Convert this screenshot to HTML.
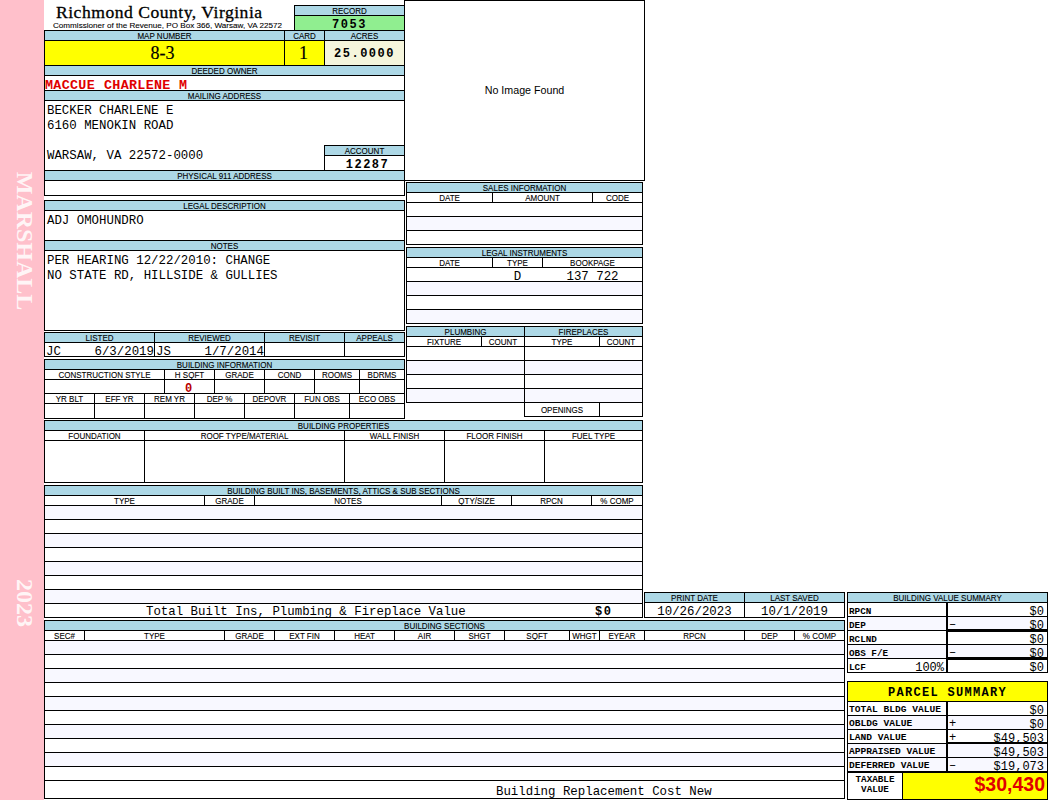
<!DOCTYPE html>
<html><head><meta charset="utf-8"><style>
html,body{margin:0;padding:0;background:#fff;width:1050px;height:800px;overflow:hidden}
body{position:relative}
.a{position:absolute;box-sizing:border-box}
.k{background:#000}
.t{white-space:nowrap;overflow:visible;color:#000}
.lab{font-family:"Liberation Sans",sans-serif;font-size:8px;-webkit-text-stroke:0.1px #000;transform:translateY(1px) scaleY(1.18)}
.mono{font-family:"Liberation Mono",monospace;font-size:12.4px}
.mono2{font-family:"Liberation Mono",monospace;font-size:12.4px}
.mb{font-family:"Liberation Mono",monospace;font-size:12px;font-weight:bold;letter-spacing:1.5px}
.big{font-family:"Liberation Serif",serif;font-size:18px;-webkit-text-stroke:0.2px #000}
.owner{font-family:"Liberation Mono",monospace;font-size:13.4px;letter-spacing:0.3px;font-weight:bold;color:#e00000}
.redb{font-family:"Liberation Mono",monospace;font-size:12px;font-weight:bold;color:#b80000}
.noimg{font-family:"Liberation Sans",sans-serif;font-size:10.7px}
.slab{font-family:"Liberation Mono",monospace;font-size:9.3px;font-weight:bold}
.val{font-family:"Liberation Mono",monospace;font-size:12px}
.psum{font-family:"Liberation Mono",monospace;font-size:12px;font-weight:bold;letter-spacing:1.3px}
.slab2{font-family:"Liberation Mono",monospace;font-size:9.6px;font-weight:bold}
.tax{font-family:"Liberation Sans",sans-serif;font-size:19.5px;font-weight:bold;color:#e00000}
.side{display:flex;align-items:center;justify-content:center;color:rgba(255,255,255,0.85)}
.rot{display:inline-block;transform:rotate(90deg);font-family:"Liberation Serif",serif;white-space:nowrap;line-height:1}
.b{font-weight:bold}
</style></head><body>
<div class="a" style="left:0px;top:0px;width:44px;height:800px;background:#ffc0cb"></div>
<div class="a side" style="left:3px;top:171px;width:44px;height:140px"><span class="rot b" style="font-size:24px">MARSHALL</span></div>
<div class="a side" style="left:3px;top:578px;width:44px;height:50px"><span class="rot b" style="font-size:24px">2023</span></div>
<div class="a t" style="left:56px;top:2px;font:17.6px 'Liberation Serif',serif;letter-spacing:0.5px;line-height:20px;-webkit-text-stroke:0.3px #000">Richmond County, Virginia</div>
<div class="a t" style="left:53px;top:21px;font-family:Liberation Sans,sans-serif;font-size:8.1px;line-height:10px;-webkit-text-stroke:0.1px #000">Commissioner of the Revenue, PO Box 366, Warsaw, VA 22572</div>
<div class="a k" style="left:294px;top:5px;width:111px;height:1px"></div>
<div class="a k" style="left:294px;top:30px;width:111px;height:1px"></div>
<div class="a k" style="left:294px;top:5px;width:1px;height:26px"></div>
<div class="a k" style="left:404px;top:5px;width:1px;height:26px"></div>
<div class="a" style="left:295px;top:6px;width:109px;height:9px;background:#add8e6"></div>
<div class="a t lab" style="left:295px;top:6px;width:109px;height:9px;line-height:9px;text-align:center;">RECORD</div>
<div class="a k" style="left:294px;top:15px;width:111px;height:1px"></div>
<div class="a" style="left:295px;top:16px;width:109px;height:14px;background:#90ee90"></div>
<div class="a t mb" style="left:295px;top:18px;width:109px;height:14px;line-height:14px;text-align:center;">7053</div>
<div class="a k" style="left:44px;top:30px;width:361px;height:1px"></div>
<div class="a k" style="left:44px;top:195px;width:361px;height:1px"></div>
<div class="a k" style="left:44px;top:30px;width:1px;height:166px"></div>
<div class="a k" style="left:404px;top:30px;width:1px;height:166px"></div>
<div class="a" style="left:45px;top:31px;width:239px;height:9px;background:#add8e6"></div>
<div class="a t lab" style="left:45px;top:31px;width:239px;height:9px;line-height:9px;text-align:center;">MAP NUMBER</div>
<div class="a" style="left:285px;top:31px;width:39px;height:9px;background:#add8e6"></div>
<div class="a t lab" style="left:285px;top:31px;width:39px;height:9px;line-height:9px;text-align:center;">CARD</div>
<div class="a" style="left:325px;top:31px;width:79px;height:9px;background:#add8e6"></div>
<div class="a t lab" style="left:325px;top:31px;width:79px;height:9px;line-height:9px;text-align:center;">ACRES</div>
<div class="a k" style="left:44px;top:40px;width:361px;height:1px"></div>
<div class="a k" style="left:284px;top:30px;width:1px;height:36px"></div>
<div class="a k" style="left:324px;top:30px;width:1px;height:36px"></div>
<div class="a" style="left:45px;top:41px;width:239px;height:24px;background:#ffff00"></div>
<div class="a t big" style="left:43px;top:41px;width:239px;height:24px;line-height:24px;text-align:center;">8-3</div>
<div class="a" style="left:285px;top:41px;width:39px;height:24px;background:#ffff00"></div>
<div class="a t big" style="left:284px;top:41px;width:39px;height:24px;line-height:24px;text-align:center;">1</div>
<div class="a" style="left:325px;top:41px;width:79px;height:24px;background:#f5f5dc"></div>
<div class="a t mb" style="left:325px;top:42px;width:79px;height:24px;line-height:24px;text-align:center;">25.0000</div>
<div class="a k" style="left:44px;top:65px;width:361px;height:1px"></div>
<div class="a" style="left:45px;top:66px;width:359px;height:9px;background:#add8e6"></div>
<div class="a t lab" style="left:45px;top:66px;width:359px;height:9px;line-height:9px;text-align:center;">DEEDED OWNER</div>
<div class="a k" style="left:44px;top:75px;width:361px;height:1px"></div>
<div class="a t owner" style="left:45px;top:79px;width:359px;height:14px;line-height:14px;text-align:left;">MACCUE</div>
<div class="a t owner" style="left:45px;top:79px;width:359px;height:14px;line-height:14px;text-align:left;padding-left:59px">CHARLENE M</div>
<div class="a k" style="left:44px;top:90px;width:361px;height:1px"></div>
<div class="a" style="left:45px;top:91px;width:359px;height:9px;background:#add8e6"></div>
<div class="a t lab" style="left:45px;top:91px;width:359px;height:9px;line-height:9px;text-align:center;">MAILING ADDRESS</div>
<div class="a k" style="left:44px;top:100px;width:361px;height:1px"></div>
<div class="a t mono" style="left:47px;top:104px;line-height:15px;white-space:pre">BECKER CHARLENE E
6160 MENOKIN ROAD

WARSAW, VA 22572-0000</div>
<div class="a k" style="left:324px;top:145px;width:81px;height:1px"></div>
<div class="a k" style="left:324px;top:170px;width:81px;height:1px"></div>
<div class="a k" style="left:324px;top:145px;width:1px;height:26px"></div>
<div class="a k" style="left:404px;top:145px;width:1px;height:26px"></div>
<div class="a" style="left:325px;top:146px;width:79px;height:9px;background:#add8e6"></div>
<div class="a t lab" style="left:325px;top:146px;width:79px;height:9px;line-height:9px;text-align:center;">ACCOUNT</div>
<div class="a k" style="left:324px;top:155px;width:81px;height:1px"></div>
<div class="a t mb" style="left:328px;top:158px;width:79px;height:14px;line-height:14px;text-align:center;">12287</div>
<div class="a k" style="left:44px;top:170px;width:361px;height:1px"></div>
<div class="a" style="left:45px;top:171px;width:359px;height:9px;background:#add8e6"></div>
<div class="a t lab" style="left:45px;top:171px;width:359px;height:9px;line-height:9px;text-align:center;">PHYSICAL 911 ADDRESS</div>
<div class="a k" style="left:44px;top:180px;width:361px;height:1px"></div>
<div class="a k" style="left:44px;top:200px;width:361px;height:1px"></div>
<div class="a k" style="left:44px;top:330px;width:361px;height:1px"></div>
<div class="a k" style="left:44px;top:200px;width:1px;height:131px"></div>
<div class="a k" style="left:404px;top:200px;width:1px;height:131px"></div>
<div class="a" style="left:45px;top:201px;width:359px;height:9px;background:#add8e6"></div>
<div class="a t lab" style="left:45px;top:201px;width:359px;height:9px;line-height:9px;text-align:center;">LEGAL DESCRIPTION</div>
<div class="a k" style="left:44px;top:210px;width:361px;height:1px"></div>
<div class="a t mono" style="left:47px;top:214px;line-height:15px;white-space:pre">ADJ OMOHUNDRO</div>
<div class="a k" style="left:44px;top:240px;width:361px;height:1px"></div>
<div class="a" style="left:45px;top:241px;width:359px;height:9px;background:#add8e6"></div>
<div class="a t lab" style="left:45px;top:241px;width:359px;height:9px;line-height:9px;text-align:center;">NOTES</div>
<div class="a k" style="left:44px;top:250px;width:361px;height:1px"></div>
<div class="a t mono" style="left:47px;top:254px;line-height:15px;white-space:pre">PER HEARING 12/22/2010: CHANGE
NO STATE RD, HILLSIDE &amp; GULLIES</div>
<div class="a k" style="left:44px;top:332px;width:361px;height:1px"></div>
<div class="a k" style="left:44px;top:356px;width:361px;height:1px"></div>
<div class="a k" style="left:44px;top:332px;width:1px;height:25px"></div>
<div class="a k" style="left:404px;top:332px;width:1px;height:25px"></div>
<div class="a" style="left:45px;top:333px;width:109px;height:9px;background:#add8e6"></div>
<div class="a t lab" style="left:45px;top:333px;width:109px;height:9px;line-height:9px;text-align:center;">LISTED</div>
<div class="a" style="left:155px;top:333px;width:109px;height:9px;background:#add8e6"></div>
<div class="a t lab" style="left:155px;top:333px;width:109px;height:9px;line-height:9px;text-align:center;">REVIEWED</div>
<div class="a" style="left:265px;top:333px;width:79px;height:9px;background:#add8e6"></div>
<div class="a t lab" style="left:265px;top:333px;width:79px;height:9px;line-height:9px;text-align:center;">REVISIT</div>
<div class="a" style="left:345px;top:333px;width:59px;height:9px;background:#add8e6"></div>
<div class="a t lab" style="left:345px;top:333px;width:59px;height:9px;line-height:9px;text-align:center;">APPEALS</div>
<div class="a k" style="left:44px;top:342px;width:361px;height:1px"></div>
<div class="a k" style="left:154px;top:332px;width:1px;height:25px"></div>
<div class="a k" style="left:264px;top:332px;width:1px;height:25px"></div>
<div class="a k" style="left:344px;top:332px;width:1px;height:25px"></div>
<div class="a t mono2" style="left:45px;top:346px;width:109px;height:13px;line-height:13px;text-align:left;padding-left:1px">JC</div>
<div class="a t mono2" style="left:45px;top:346px;width:109px;height:13px;line-height:13px;text-align:right;">6/3/2019</div>
<div class="a t mono2" style="left:155px;top:346px;width:109px;height:13px;line-height:13px;text-align:left;padding-left:1px">JS</div>
<div class="a t mono2" style="left:155px;top:346px;width:109px;height:13px;line-height:13px;text-align:right;">1/7/2014</div>
<div class="a k" style="left:44px;top:359px;width:361px;height:1px"></div>
<div class="a k" style="left:44px;top:418px;width:361px;height:1px"></div>
<div class="a k" style="left:44px;top:359px;width:1px;height:60px"></div>
<div class="a k" style="left:404px;top:359px;width:1px;height:60px"></div>
<div class="a" style="left:45px;top:360px;width:359px;height:9px;background:#add8e6"></div>
<div class="a t lab" style="left:45px;top:360px;width:359px;height:9px;line-height:9px;text-align:center;">BUILDING INFORMATION</div>
<div class="a k" style="left:44px;top:369px;width:361px;height:1px"></div>
<div class="a t lab" style="left:45px;top:370px;width:119px;height:9px;line-height:9px;text-align:center;">CONSTRUCTION STYLE</div>
<div class="a t lab" style="left:165px;top:370px;width:49px;height:9px;line-height:9px;text-align:center;">H SQFT</div>
<div class="a t lab" style="left:215px;top:370px;width:49px;height:9px;line-height:9px;text-align:center;">GRADE</div>
<div class="a t lab" style="left:265px;top:370px;width:49px;height:9px;line-height:9px;text-align:center;">COND</div>
<div class="a t lab" style="left:315px;top:370px;width:44px;height:9px;line-height:9px;text-align:center;">ROOMS</div>
<div class="a t lab" style="left:360px;top:370px;width:44px;height:9px;line-height:9px;text-align:center;">BDRMS</div>
<div class="a k" style="left:164px;top:369px;width:1px;height:25px"></div>
<div class="a k" style="left:214px;top:369px;width:1px;height:25px"></div>
<div class="a k" style="left:264px;top:369px;width:1px;height:25px"></div>
<div class="a k" style="left:314px;top:369px;width:1px;height:25px"></div>
<div class="a k" style="left:359px;top:369px;width:1px;height:25px"></div>
<div class="a k" style="left:44px;top:379px;width:361px;height:1px"></div>
<div class="a t redb" style="left:164px;top:383px;width:49px;height:13px;line-height:13px;text-align:center;">0</div>
<div class="a k" style="left:44px;top:393px;width:361px;height:1px"></div>
<div class="a t lab" style="left:45px;top:394px;width:49px;height:9px;line-height:9px;text-align:center;">YR BLT</div>
<div class="a t lab" style="left:95px;top:394px;width:49px;height:9px;line-height:9px;text-align:center;">EFF YR</div>
<div class="a t lab" style="left:145px;top:394px;width:49px;height:9px;line-height:9px;text-align:center;">REM YR</div>
<div class="a t lab" style="left:195px;top:394px;width:49px;height:9px;line-height:9px;text-align:center;">DEP %</div>
<div class="a t lab" style="left:245px;top:394px;width:49px;height:9px;line-height:9px;text-align:center;">DEPOVR</div>
<div class="a t lab" style="left:295px;top:394px;width:54px;height:9px;line-height:9px;text-align:center;">FUN OBS</div>
<div class="a t lab" style="left:350px;top:394px;width:54px;height:9px;line-height:9px;text-align:center;">ECO OBS</div>
<div class="a k" style="left:94px;top:393px;width:1px;height:26px"></div>
<div class="a k" style="left:144px;top:393px;width:1px;height:26px"></div>
<div class="a k" style="left:194px;top:393px;width:1px;height:26px"></div>
<div class="a k" style="left:244px;top:393px;width:1px;height:26px"></div>
<div class="a k" style="left:294px;top:393px;width:1px;height:26px"></div>
<div class="a k" style="left:349px;top:393px;width:1px;height:26px"></div>
<div class="a k" style="left:44px;top:403px;width:361px;height:1px"></div>
<div class="a k" style="left:44px;top:420px;width:599px;height:1px"></div>
<div class="a k" style="left:44px;top:482px;width:599px;height:1px"></div>
<div class="a k" style="left:44px;top:420px;width:1px;height:63px"></div>
<div class="a k" style="left:642px;top:420px;width:1px;height:63px"></div>
<div class="a" style="left:45px;top:421px;width:597px;height:9px;background:#add8e6"></div>
<div class="a t lab" style="left:45px;top:421px;width:597px;height:9px;line-height:9px;text-align:center;">BUILDING PROPERTIES</div>
<div class="a k" style="left:44px;top:430px;width:599px;height:1px"></div>
<div class="a t lab" style="left:45px;top:431px;width:99px;height:9px;line-height:9px;text-align:center;">FOUNDATION</div>
<div class="a t lab" style="left:145px;top:431px;width:199px;height:9px;line-height:9px;text-align:center;">ROOF TYPE/MATERIAL</div>
<div class="a t lab" style="left:345px;top:431px;width:99px;height:9px;line-height:9px;text-align:center;">WALL FINISH</div>
<div class="a t lab" style="left:445px;top:431px;width:99px;height:9px;line-height:9px;text-align:center;">FLOOR FINISH</div>
<div class="a t lab" style="left:545px;top:431px;width:97px;height:9px;line-height:9px;text-align:center;">FUEL TYPE</div>
<div class="a k" style="left:144px;top:430px;width:1px;height:53px"></div>
<div class="a k" style="left:344px;top:430px;width:1px;height:53px"></div>
<div class="a k" style="left:444px;top:430px;width:1px;height:53px"></div>
<div class="a k" style="left:544px;top:430px;width:1px;height:53px"></div>
<div class="a k" style="left:44px;top:440px;width:599px;height:1px"></div>
<div class="a k" style="left:44px;top:485px;width:599px;height:1px"></div>
<div class="a k" style="left:44px;top:617px;width:599px;height:1px"></div>
<div class="a k" style="left:44px;top:485px;width:1px;height:133px"></div>
<div class="a k" style="left:642px;top:485px;width:1px;height:133px"></div>
<div class="a" style="left:45px;top:486px;width:597px;height:9px;background:#add8e6"></div>
<div class="a t lab" style="left:45px;top:486px;width:597px;height:9px;line-height:9px;text-align:center;">BUILDING BUILT INS, BASEMENTS, ATTICS &amp; SUB SECTIONS</div>
<div class="a k" style="left:44px;top:495px;width:599px;height:1px"></div>
<div class="a t lab" style="left:45px;top:496px;width:159px;height:9px;line-height:9px;text-align:center;">TYPE</div>
<div class="a t lab" style="left:205px;top:496px;width:49px;height:9px;line-height:9px;text-align:center;">GRADE</div>
<div class="a t lab" style="left:255px;top:496px;width:186px;height:9px;line-height:9px;text-align:center;">NOTES</div>
<div class="a t lab" style="left:442px;top:496px;width:69px;height:9px;line-height:9px;text-align:center;">QTY/SIZE</div>
<div class="a t lab" style="left:512px;top:496px;width:79px;height:9px;line-height:9px;text-align:center;">RPCN</div>
<div class="a t lab" style="left:592px;top:496px;width:50px;height:9px;line-height:9px;text-align:center;">% COMP</div>
<div class="a k" style="left:204px;top:495px;width:1px;height:11px"></div>
<div class="a k" style="left:254px;top:495px;width:1px;height:11px"></div>
<div class="a k" style="left:441px;top:495px;width:1px;height:11px"></div>
<div class="a k" style="left:511px;top:495px;width:1px;height:11px"></div>
<div class="a k" style="left:591px;top:495px;width:1px;height:11px"></div>
<div class="a k" style="left:44px;top:505px;width:599px;height:1px"></div>
<div class="a" style="left:45px;top:506px;width:597px;height:13px;background:#f8f8ff"></div>
<div class="a k" style="left:44px;top:519px;width:599px;height:1px"></div>
<div class="a k" style="left:44px;top:533px;width:599px;height:1px"></div>
<div class="a" style="left:45px;top:534px;width:597px;height:13px;background:#f8f8ff"></div>
<div class="a k" style="left:44px;top:547px;width:599px;height:1px"></div>
<div class="a k" style="left:44px;top:561px;width:599px;height:1px"></div>
<div class="a" style="left:45px;top:562px;width:597px;height:13px;background:#f8f8ff"></div>
<div class="a k" style="left:44px;top:575px;width:599px;height:1px"></div>
<div class="a k" style="left:44px;top:589px;width:599px;height:1px"></div>
<div class="a" style="left:45px;top:590px;width:597px;height:13px;background:#f8f8ff"></div>
<div class="a k" style="left:44px;top:603px;width:599px;height:1px"></div>
<div class="a k" style="left:44px;top:617px;width:599px;height:1px"></div>
<div class="a t mono" style="left:45px;top:606px;width:597px;height:13px;line-height:13px;text-align:left;padding-left:101px">Total Built Ins, Plumbing &amp; Fireplace Value</div>
<div class="a t mb" style="left:45px;top:606px;width:597px;height:13px;line-height:13px;text-align:left;padding-left:550px">$0</div>
<div class="a k" style="left:44px;top:620px;width:801px;height:1px"></div>
<div class="a k" style="left:44px;top:798px;width:801px;height:1px"></div>
<div class="a k" style="left:44px;top:620px;width:1px;height:179px"></div>
<div class="a k" style="left:844px;top:620px;width:1px;height:179px"></div>
<div class="a" style="left:45px;top:621px;width:799px;height:9px;background:#add8e6"></div>
<div class="a t lab" style="left:45px;top:621px;width:799px;height:9px;line-height:9px;text-align:center;">BUILDING SECTIONS</div>
<div class="a k" style="left:44px;top:630px;width:801px;height:1px"></div>
<div class="a t lab" style="left:45px;top:631px;width:39px;height:9px;line-height:9px;text-align:center;">SEC#</div>
<div class="a t lab" style="left:85px;top:631px;width:139px;height:9px;line-height:9px;text-align:center;">TYPE</div>
<div class="a t lab" style="left:225px;top:631px;width:49px;height:9px;line-height:9px;text-align:center;">GRADE</div>
<div class="a t lab" style="left:275px;top:631px;width:59px;height:9px;line-height:9px;text-align:center;">EXT FIN</div>
<div class="a t lab" style="left:335px;top:631px;width:59px;height:9px;line-height:9px;text-align:center;">HEAT</div>
<div class="a t lab" style="left:395px;top:631px;width:59px;height:9px;line-height:9px;text-align:center;">AIR</div>
<div class="a t lab" style="left:455px;top:631px;width:49px;height:9px;line-height:9px;text-align:center;">SHGT</div>
<div class="a t lab" style="left:505px;top:631px;width:64px;height:9px;line-height:9px;text-align:center;">SQFT</div>
<div class="a t lab" style="left:570px;top:631px;width:29px;height:9px;line-height:9px;text-align:center;">WHGT</div>
<div class="a t lab" style="left:600px;top:631px;width:44px;height:9px;line-height:9px;text-align:center;">EYEAR</div>
<div class="a t lab" style="left:645px;top:631px;width:99px;height:9px;line-height:9px;text-align:center;">RPCN</div>
<div class="a t lab" style="left:745px;top:631px;width:49px;height:9px;line-height:9px;text-align:center;">DEP</div>
<div class="a t lab" style="left:795px;top:631px;width:49px;height:9px;line-height:9px;text-align:center;">% COMP</div>
<div class="a k" style="left:84px;top:630px;width:1px;height:11px"></div>
<div class="a k" style="left:224px;top:630px;width:1px;height:11px"></div>
<div class="a k" style="left:274px;top:630px;width:1px;height:11px"></div>
<div class="a k" style="left:334px;top:630px;width:1px;height:11px"></div>
<div class="a k" style="left:394px;top:630px;width:1px;height:11px"></div>
<div class="a k" style="left:454px;top:630px;width:1px;height:11px"></div>
<div class="a k" style="left:504px;top:630px;width:1px;height:11px"></div>
<div class="a k" style="left:569px;top:630px;width:1px;height:11px"></div>
<div class="a k" style="left:599px;top:630px;width:1px;height:11px"></div>
<div class="a k" style="left:644px;top:630px;width:1px;height:11px"></div>
<div class="a k" style="left:744px;top:630px;width:1px;height:11px"></div>
<div class="a k" style="left:794px;top:630px;width:1px;height:11px"></div>
<div class="a k" style="left:44px;top:640px;width:801px;height:1px"></div>
<div class="a" style="left:45px;top:641px;width:799px;height:13px;background:#f8f8ff"></div>
<div class="a k" style="left:44px;top:654px;width:801px;height:1px"></div>
<div class="a k" style="left:44px;top:668px;width:801px;height:1px"></div>
<div class="a" style="left:45px;top:669px;width:799px;height:13px;background:#f8f8ff"></div>
<div class="a k" style="left:44px;top:682px;width:801px;height:1px"></div>
<div class="a k" style="left:44px;top:696px;width:801px;height:1px"></div>
<div class="a" style="left:45px;top:697px;width:799px;height:13px;background:#f8f8ff"></div>
<div class="a k" style="left:44px;top:710px;width:801px;height:1px"></div>
<div class="a k" style="left:44px;top:724px;width:801px;height:1px"></div>
<div class="a" style="left:45px;top:725px;width:799px;height:13px;background:#f8f8ff"></div>
<div class="a k" style="left:44px;top:738px;width:801px;height:1px"></div>
<div class="a k" style="left:44px;top:752px;width:801px;height:1px"></div>
<div class="a" style="left:45px;top:753px;width:799px;height:13px;background:#f8f8ff"></div>
<div class="a k" style="left:44px;top:766px;width:801px;height:1px"></div>
<div class="a k" style="left:44px;top:780px;width:801px;height:1px"></div>
<div class="a k" style="left:44px;top:798px;width:801px;height:1px"></div>
<div class="a t mono" style="left:45px;top:784px;width:799px;height:17px;line-height:17px;text-align:left;padding-left:451px">Building Replacement Cost New</div>
<div class="a k" style="left:404px;top:0px;width:241px;height:1px"></div>
<div class="a k" style="left:404px;top:180px;width:241px;height:1px"></div>
<div class="a k" style="left:404px;top:0px;width:1px;height:181px"></div>
<div class="a k" style="left:644px;top:0px;width:1px;height:181px"></div>
<div class="a t noimg" style="left:405px;top:1px;width:239px;height:179px;line-height:179px;text-align:center;">No Image Found</div>
<div class="a k" style="left:406px;top:182px;width:237px;height:1px"></div>
<div class="a k" style="left:406px;top:244px;width:237px;height:1px"></div>
<div class="a k" style="left:406px;top:182px;width:1px;height:63px"></div>
<div class="a k" style="left:642px;top:182px;width:1px;height:63px"></div>
<div class="a" style="left:407px;top:183px;width:235px;height:9px;background:#add8e6"></div>
<div class="a t lab" style="left:407px;top:183px;width:235px;height:9px;line-height:9px;text-align:center;">SALES INFORMATION</div>
<div class="a k" style="left:406px;top:192px;width:237px;height:1px"></div>
<div class="a t lab" style="left:407px;top:193px;width:85px;height:9px;line-height:9px;text-align:center;">DATE</div>
<div class="a t lab" style="left:493px;top:193px;width:99px;height:9px;line-height:9px;text-align:center;">AMOUNT</div>
<div class="a t lab" style="left:593px;top:193px;width:49px;height:9px;line-height:9px;text-align:center;">CODE</div>
<div class="a k" style="left:492px;top:192px;width:1px;height:11px"></div>
<div class="a k" style="left:592px;top:192px;width:1px;height:11px"></div>
<div class="a k" style="left:406px;top:202px;width:237px;height:1px"></div>
<div class="a" style="left:407px;top:217px;width:235px;height:13px;background:#f8f8ff"></div>
<div class="a k" style="left:406px;top:216px;width:237px;height:1px"></div>
<div class="a k" style="left:406px;top:230px;width:237px;height:1px"></div>
<div class="a k" style="left:406px;top:247px;width:237px;height:1px"></div>
<div class="a k" style="left:406px;top:323px;width:237px;height:1px"></div>
<div class="a k" style="left:406px;top:247px;width:1px;height:77px"></div>
<div class="a k" style="left:642px;top:247px;width:1px;height:77px"></div>
<div class="a" style="left:407px;top:248px;width:235px;height:9px;background:#add8e6"></div>
<div class="a t lab" style="left:407px;top:248px;width:235px;height:9px;line-height:9px;text-align:center;">LEGAL INSTRUMENTS</div>
<div class="a k" style="left:406px;top:257px;width:237px;height:1px"></div>
<div class="a t lab" style="left:407px;top:258px;width:85px;height:9px;line-height:9px;text-align:center;">DATE</div>
<div class="a t lab" style="left:493px;top:258px;width:49px;height:9px;line-height:9px;text-align:center;">TYPE</div>
<div class="a t lab" style="left:543px;top:258px;width:99px;height:9px;line-height:9px;text-align:center;">BOOKPAGE</div>
<div class="a k" style="left:492px;top:257px;width:1px;height:11px"></div>
<div class="a k" style="left:542px;top:257px;width:1px;height:11px"></div>
<div class="a k" style="left:406px;top:267px;width:237px;height:1px"></div>
<div class="a" style="left:407px;top:282px;width:235px;height:13px;background:#f8f8ff"></div>
<div class="a" style="left:407px;top:310px;width:235px;height:13px;background:#f8f8ff"></div>
<div class="a k" style="left:406px;top:281px;width:237px;height:1px"></div>
<div class="a k" style="left:406px;top:295px;width:237px;height:1px"></div>
<div class="a k" style="left:406px;top:309px;width:237px;height:1px"></div>
<div class="a t mono" style="left:493px;top:271px;width:49px;height:13px;line-height:13px;text-align:center;">D</div>
<div class="a t mono" style="left:543px;top:271px;width:99px;height:13px;line-height:13px;text-align:center;">137 722</div>
<div class="a k" style="left:406px;top:326px;width:119px;height:1px"></div>
<div class="a k" style="left:406px;top:402px;width:119px;height:1px"></div>
<div class="a k" style="left:406px;top:326px;width:1px;height:77px"></div>
<div class="a k" style="left:524px;top:326px;width:1px;height:77px"></div>
<div class="a k" style="left:524px;top:326px;width:119px;height:1px"></div>
<div class="a k" style="left:524px;top:416px;width:119px;height:1px"></div>
<div class="a k" style="left:524px;top:326px;width:1px;height:91px"></div>
<div class="a k" style="left:642px;top:326px;width:1px;height:91px"></div>
<div class="a" style="left:407px;top:327px;width:117px;height:9px;background:#add8e6"></div>
<div class="a t lab" style="left:407px;top:327px;width:117px;height:9px;line-height:9px;text-align:center;">PLUMBING</div>
<div class="a" style="left:525px;top:327px;width:117px;height:9px;background:#add8e6"></div>
<div class="a t lab" style="left:525px;top:327px;width:117px;height:9px;line-height:9px;text-align:center;">FIREPLACES</div>
<div class="a k" style="left:406px;top:336px;width:237px;height:1px"></div>
<div class="a t lab" style="left:407px;top:337px;width:74px;height:9px;line-height:9px;text-align:center;">FIXTURE</div>
<div class="a t lab" style="left:482px;top:337px;width:42px;height:9px;line-height:9px;text-align:center;">COUNT</div>
<div class="a t lab" style="left:525px;top:337px;width:74px;height:9px;line-height:9px;text-align:center;">TYPE</div>
<div class="a t lab" style="left:600px;top:337px;width:42px;height:9px;line-height:9px;text-align:center;">COUNT</div>
<div class="a k" style="left:481px;top:336px;width:1px;height:11px"></div>
<div class="a k" style="left:599px;top:336px;width:1px;height:11px"></div>
<div class="a k" style="left:406px;top:346px;width:237px;height:1px"></div>
<div class="a" style="left:407px;top:361px;width:235px;height:13px;background:#f8f8ff"></div>
<div class="a" style="left:407px;top:389px;width:235px;height:13px;background:#f8f8ff"></div>
<div class="a k" style="left:524px;top:326px;width:1px;height:91px"></div>
<div class="a k" style="left:406px;top:360px;width:237px;height:1px"></div>
<div class="a k" style="left:406px;top:374px;width:237px;height:1px"></div>
<div class="a k" style="left:406px;top:388px;width:237px;height:1px"></div>
<div class="a k" style="left:406px;top:402px;width:237px;height:1px"></div>
<div class="a t lab" style="left:525px;top:403px;width:74px;height:13px;line-height:13px;text-align:center;">OPENINGS</div>
<div class="a k" style="left:599px;top:402px;width:1px;height:15px"></div>
<div class="a k" style="left:644px;top:592px;width:201px;height:1px"></div>
<div class="a k" style="left:644px;top:617px;width:201px;height:1px"></div>
<div class="a k" style="left:644px;top:592px;width:1px;height:26px"></div>
<div class="a k" style="left:844px;top:592px;width:1px;height:26px"></div>
<div class="a" style="left:645px;top:593px;width:99px;height:9px;background:#add8e6"></div>
<div class="a t lab" style="left:645px;top:593px;width:99px;height:9px;line-height:9px;text-align:center;">PRINT DATE</div>
<div class="a" style="left:745px;top:593px;width:99px;height:9px;background:#add8e6"></div>
<div class="a t lab" style="left:745px;top:593px;width:99px;height:9px;line-height:9px;text-align:center;">LAST SAVED</div>
<div class="a k" style="left:644px;top:602px;width:201px;height:1px"></div>
<div class="a k" style="left:744px;top:592px;width:1px;height:26px"></div>
<div class="a t mono2" style="left:645px;top:605px;width:99px;height:14px;line-height:14px;text-align:center;">10/26/2023</div>
<div class="a t mono2" style="left:745px;top:605px;width:99px;height:14px;line-height:14px;text-align:center;">10/1/2019</div>
<div class="a k" style="left:847px;top:592px;width:201px;height:1px"></div>
<div class="a k" style="left:847px;top:672px;width:201px;height:1px"></div>
<div class="a k" style="left:847px;top:592px;width:1px;height:81px"></div>
<div class="a k" style="left:1047px;top:592px;width:1px;height:81px"></div>
<div class="a" style="left:848px;top:593px;width:199px;height:9px;background:#add8e6"></div>
<div class="a t lab" style="left:848px;top:593px;width:199px;height:9px;line-height:9px;text-align:center;">BUILDING VALUE SUMMARY</div>
<div class="a k" style="left:847px;top:602px;width:201px;height:1px"></div>
<div class="a t slab" style="left:848px;top:605px;width:99px;height:13px;line-height:13px;text-align:left;padding-left:1px">RPCN</div>
<div class="a t val" style="left:948px;top:606px;width:99px;height:13px;line-height:13px;text-align:right;padding-right:3px">$0</div>
<div class="a k" style="left:847px;top:616px;width:201px;height:1px"></div>
<div class="a" style="left:848px;top:617px;width:199px;height:13px;background:#f8f8ff"></div>
<div class="a t slab" style="left:848px;top:619px;width:99px;height:13px;line-height:13px;text-align:left;padding-left:1px">DEP</div>
<div class="a t val" style="left:948px;top:619px;width:99px;height:13px;line-height:13px;text-align:left;padding-left:1px">&ndash;</div>
<div class="a t val" style="left:948px;top:620px;width:99px;height:13px;line-height:13px;text-align:right;padding-right:3px">$0</div>
<div class="a k" style="left:847px;top:630px;width:201px;height:1px"></div>
<div class="a t slab" style="left:848px;top:633px;width:99px;height:13px;line-height:13px;text-align:left;padding-left:1px">RCLND</div>
<div class="a t val" style="left:948px;top:634px;width:99px;height:13px;line-height:13px;text-align:right;padding-right:3px">$0</div>
<div class="a k" style="left:847px;top:644px;width:201px;height:1px"></div>
<div class="a" style="left:848px;top:645px;width:199px;height:13px;background:#f8f8ff"></div>
<div class="a t slab" style="left:848px;top:647px;width:99px;height:13px;line-height:13px;text-align:left;padding-left:1px">OBS F/E</div>
<div class="a t val" style="left:948px;top:647px;width:99px;height:13px;line-height:13px;text-align:left;padding-left:1px">&ndash;</div>
<div class="a t val" style="left:948px;top:648px;width:99px;height:13px;line-height:13px;text-align:right;padding-right:3px">$0</div>
<div class="a k" style="left:847px;top:658px;width:201px;height:1px"></div>
<div class="a t slab" style="left:848px;top:661px;width:99px;height:13px;line-height:13px;text-align:left;padding-left:1px">LCF</div>
<div class="a t val" style="left:948px;top:662px;width:99px;height:13px;line-height:13px;text-align:right;padding-right:3px">$0</div>
<div class="a k" style="left:847px;top:672px;width:201px;height:1px"></div>
<div class="a t val" style="left:848px;top:662px;width:99px;height:13px;line-height:13px;text-align:right;padding-right:3px">100%</div>
<div class="a k" style="left:946px;top:602px;width:2px;height:71px"></div>
<div class="a k" style="left:947px;top:629px;width:101px;height:3px"></div>
<div class="a k" style="left:947px;top:657px;width:101px;height:3px"></div>
<div class="a k" style="left:847px;top:681px;width:201px;height:1px"></div>
<div class="a k" style="left:847px;top:799px;width:201px;height:1px"></div>
<div class="a k" style="left:847px;top:681px;width:1px;height:119px"></div>
<div class="a k" style="left:1047px;top:681px;width:1px;height:119px"></div>
<div class="a" style="left:848px;top:682px;width:199px;height:19px;background:#ffff00"></div>
<div class="a t psum" style="left:848px;top:684px;width:199px;height:19px;line-height:19px;text-align:center;">PARCEL SUMMARY</div>
<div class="a k" style="left:847px;top:701px;width:201px;height:1px"></div>
<div class="a t slab2" style="left:848px;top:703px;width:99px;height:13px;line-height:13px;text-align:left;padding-left:1px">TOTAL BLDG VALUE</div>
<div class="a t val" style="left:948px;top:705px;width:99px;height:13px;line-height:13px;text-align:right;padding-right:3px">$0</div>
<div class="a k" style="left:847px;top:715px;width:201px;height:1px"></div>
<div class="a" style="left:848px;top:716px;width:199px;height:13px;background:#f8f8ff"></div>
<div class="a t slab2" style="left:848px;top:717px;width:99px;height:13px;line-height:13px;text-align:left;padding-left:1px">OBLDG VALUE</div>
<div class="a t val" style="left:948px;top:718px;width:99px;height:13px;line-height:13px;text-align:left;padding-left:1px">+</div>
<div class="a t val" style="left:948px;top:719px;width:99px;height:13px;line-height:13px;text-align:right;padding-right:3px">$0</div>
<div class="a k" style="left:847px;top:729px;width:201px;height:1px"></div>
<div class="a t slab2" style="left:848px;top:731px;width:99px;height:13px;line-height:13px;text-align:left;padding-left:1px">LAND VALUE</div>
<div class="a t val" style="left:948px;top:732px;width:99px;height:13px;line-height:13px;text-align:left;padding-left:1px">+</div>
<div class="a t val" style="left:948px;top:733px;width:99px;height:13px;line-height:13px;text-align:right;padding-right:3px">$49,503</div>
<div class="a k" style="left:847px;top:743px;width:201px;height:1px"></div>
<div class="a" style="left:848px;top:744px;width:199px;height:13px;background:#f8f8ff"></div>
<div class="a t slab2" style="left:848px;top:745px;width:99px;height:13px;line-height:13px;text-align:left;padding-left:1px">APPRAISED VALUE</div>
<div class="a t val" style="left:948px;top:747px;width:99px;height:13px;line-height:13px;text-align:right;padding-right:3px">$49,503</div>
<div class="a k" style="left:847px;top:757px;width:201px;height:1px"></div>
<div class="a" style="left:848px;top:758px;width:199px;height:13px;background:#f8f8ff"></div>
<div class="a t slab2" style="left:848px;top:759px;width:99px;height:13px;line-height:13px;text-align:left;padding-left:1px">DEFERRED VALUE</div>
<div class="a t val" style="left:948px;top:760px;width:99px;height:13px;line-height:13px;text-align:left;padding-left:1px">&ndash;</div>
<div class="a t val" style="left:948px;top:761px;width:99px;height:13px;line-height:13px;text-align:right;padding-right:3px">$19,073</div>
<div class="a k" style="left:847px;top:771px;width:201px;height:1px"></div>
<div class="a k" style="left:946px;top:701px;width:2px;height:71px"></div>
<div class="a k" style="left:947px;top:742px;width:101px;height:2px"></div>
<div class="a k" style="left:847px;top:771px;width:201px;height:2px"></div>
<div class="a" style="left:903px;top:773px;width:144px;height:26px;background:#ffff00"></div>
<div class="a k" style="left:902px;top:771px;width:1px;height:29px"></div>
<div class="a t slab" style="left:848px;top:775px;width:54px;line-height:10px;text-align:center">TAXABLE<br>VALUE</div>
<div class="a t tax" style="left:903px;top:771px;width:144px;height:26px;line-height:26px;text-align:right;padding-right:2px">$30,430</div>
</body></html>
